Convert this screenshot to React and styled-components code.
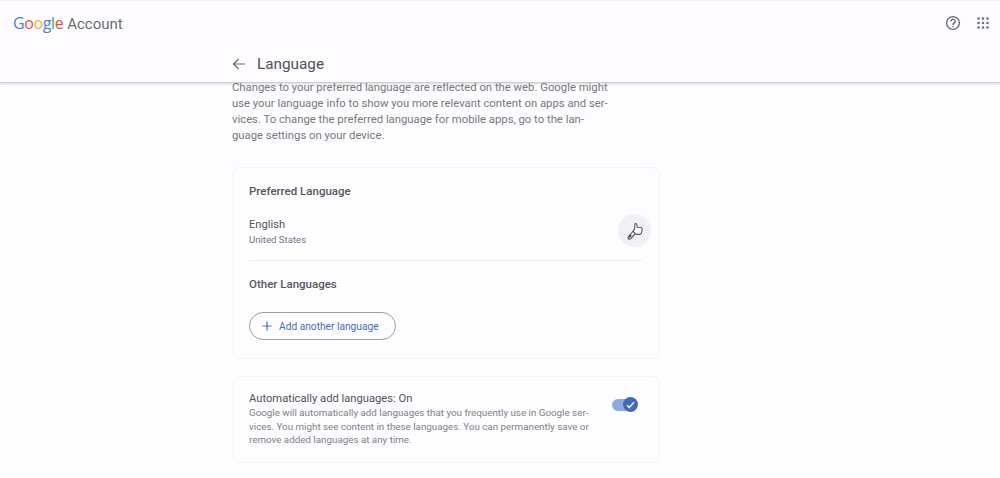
import React from 'react';
import styled, { createGlobalStyle } from 'styled-components';

const GlobalStyle = createGlobalStyle`
  html, body {
    margin: 0;
    height: 100%;
    background: #fdfcfe;
    overflow: hidden;
  }
  body {
    font-family: Roboto, "Liberation Sans", sans-serif;
    color: #45484b;
  }
`;

const Page = styled.div`
  width: 1000px;
  height: 478px;
  overflow: hidden;
`;

const Header = styled.header`
  position: relative;
  height: 83px;
  box-sizing: border-box;
  background: #fefcff;
  border-top: 1px solid #f0eff1;
  border-bottom: 1px solid #cfcfd0;
  box-shadow: 0 1px 3px rgba(60, 64, 67, 0.2);
`;

const TopBar = styled.div`
  height: 43px;
  padding: 0 11px 0 13px;
  display: flex;
  align-items: center;
  justify-content: space-between;
`;

const Brand = styled.div`
  display: flex;
  align-items: baseline;
  gap: 4px;
  font-size: 15px;
  color: #696c70;
`;

const Logo = styled.span`
  font-family: "Open Sans", Roboto, sans-serif;
  font-size: 16px;
  letter-spacing: -0.4px;
`;

const Letter = styled.span`
  color: ${props => props.$color};
`;

const TopIcons = styled.div`
  display: flex;
  align-items: center;
  gap: 16px;
`;

const SubBar = styled.div`
  height: 38px;
  box-sizing: border-box;
  padding: 1px 0 0 232px;
  display: flex;
  align-items: center;
  gap: 11px;
`;

const Title = styled.h1`
  margin: 0;
  font-size: 15.3px;
  font-weight: 400;
  color: #505357;
`;

const Main = styled.main`
  width: 428px;
  margin-left: 232px;
`;

const Intro = styled.p`
  margin: -3px 0 23px;
  font-size: 11.3px;
  line-height: 16px;
  color: #77797d;
`;

const Card = styled.section`
  box-sizing: border-box;
  margin-left: 1px;
  width: 427px;
  border: 1px solid #f3f2f5;
  border-radius: 8px;
  padding: 0 15px;
`;

const LanguageCard = styled(Card)`
  height: 192px;
  padding-top: 15px;
  margin-bottom: 17px;
`;

const AutoCard = styled(Card)`
  height: 87px;
  padding-top: 8px;
  display: flex;
  align-items: flex-start;
  justify-content: space-between;
`;

const CardTitle = styled.h2`
  margin: 0;
  font-size: 11.5px;
  line-height: 16px;
  font-weight: 500;
  color: #55585c;
`;

const LanguageRow = styled.div`
  box-sizing: border-box;
  height: 45px;
  margin: 17px 2px 0 0;
  display: flex;
  align-items: flex-start;
  justify-content: space-between;
  border-bottom: 1px solid #eeedf0;
`;

const LanguageName = styled.div`
  padding-top: 1px;
  font-size: 11.2px;
  line-height: 16px;
  color: #505357;
`;

const LanguageRegion = styled.div`
  margin-top: -1px;
  font-size: 9.6px;
  line-height: 16px;
  color: #77797d;
`;

const EditButton = styled.div`
  width: 33px;
  height: 33px;
  margin: -2px -9px 0 0;
  border-radius: 50%;
  background: #f1f0f3;
  display: flex;
  align-items: center;
  justify-content: center;
`;

const OtherTitle = styled(CardTitle)`
  margin-top: 15px;
`;

const AddButton = styled.button`
  margin-top: 20px;
  width: 147px;
  height: 28px;
  box-sizing: border-box;
  padding: 0 0 0 12px;
  display: flex;
  align-items: center;
  gap: 7px;
  background: transparent;
  border: 1px solid #9a9da1;
  border-radius: 14px;
  font-family: inherit;
  font-size: 10.2px;
  font-weight: 400;
  color: #4a6fb8;
`;

const AutoText = styled.div`
  padding-top: 6px;
`;

const AutoTitle = styled.div`
  font-size: 11.2px;
  line-height: 15px;
  color: #505357;
`;

const AutoBody = styled.p`
  margin: 0;
  font-size: 9.8px;
  line-height: 13.5px;
  color: #7f8185;
`;

const Toggle = styled.div`
  position: relative;
  width: 25px;
  height: 12px;
  margin: 14px 7px 0 0;
  border-radius: 6px;
  background: #8ea9dc;
`;

const ToggleThumb = styled.div`
  position: absolute;
  right: -1px;
  top: -2px;
  width: 15px;
  height: 15px;
  border-radius: 50%;
  background: #4169bd;
  display: flex;
  align-items: center;
  justify-content: center;
`;

const HelpIcon = () => (
  <svg width="16" height="16" viewBox="0 0 16 16" fill="none">
    <circle cx="8" cy="8" r="6.4" stroke="#6b6e72" strokeWidth="1.4" />
    <path d="M5.9 6.4a2.1 2.1 0 1 1 3.3 1.7c-.7.5-1.2.9-1.2 1.8" stroke="#5f6368" strokeWidth="1.3" />
    <circle cx="8" cy="11.5" r=".8" fill="#5f6368" />
  </svg>
);

const AppsIcon = () => (
  <svg width="12" height="12" viewBox="0 0 12 12" fill="#6b6e72">
    {[1.5, 6, 10.5].map(y =>
      [1.5, 6, 10.5].map(x => <circle key={`${x}-${y}`} cx={x} cy={y} r="1.3" />)
    )}
  </svg>
);

const BackIcon = () => (
  <svg width="14" height="14" viewBox="0 0 14 14" fill="none" stroke="#6b6e72" strokeWidth="1.2">
    <path d="M13 7H1.5M6.5 2 1.5 7l5 5" />
  </svg>
);

const CursorIcon = () => (
  <svg width="18" height="18" viewBox="0 0 18 18">
    <path d="M2 15.5 8 8l2.5 2.2-5.8 6.5-2.3.3z" fill="#fff" stroke="#55585c" strokeWidth="1.2" />
    <path d="M3 15.2 5 13" stroke="#3c4043" strokeWidth="2" />
    <path d="M9.5 1.5c1 0 1.4.6 1.4 1.5l.2 2.2 3.4.3c1.3.2 2 1 1.7 2.2l-.8 3.2c-.2 1-1 1.5-2 1.5h-3L7 9.5l1.6-2.3.3-4.5c0-.7.2-1.2.6-1.2z" fill="#fff" stroke="#55585c" strokeWidth="1.1" />
  </svg>
);

const PlusIcon = () => (
  <svg width="10" height="10" viewBox="0 0 10 10" stroke="#4a6fb8" strokeWidth="1.2">
    <path d="M5 .5v9M.5 5h9" />
  </svg>
);

const CheckIcon = () => (
  <svg width="9" height="8" viewBox="0 0 9 8" fill="none" stroke="#fff" strokeWidth="1.4">
    <path d="M1 4.2 3.3 6.5 8 1.2" />
  </svg>
);

const App = () => (
  <Page>
    <GlobalStyle />
    <Header>
      <TopBar>
        <Brand>
          <Logo>
            <Letter $color="#4a7fd9">G</Letter>
            <Letter $color="#d9534a">o</Letter>
            <Letter $color="#e5b73b">o</Letter>
            <Letter $color="#4a7fd9">g</Letter>
            <Letter $color="#4ea35f">l</Letter>
            <Letter $color="#d9534a">e</Letter>
          </Logo>
          Account
        </Brand>
        <TopIcons>
          <HelpIcon />
          <AppsIcon />
        </TopIcons>
      </TopBar>
      <SubBar>
        <BackIcon />
        <Title>Language</Title>
      </SubBar>
    </Header>
    <Main>
      <Intro>
        Changes to your preferred language are reflected on the web. Google might<br />
        use your language info to show you more relevant content on apps and ser-<br />
        vices. To change the preferred language for mobile apps, go to the lan-<br />
        guage settings on your device.
      </Intro>
      <LanguageCard>
        <CardTitle>Preferred Language</CardTitle>
        <LanguageRow>
          <div>
            <LanguageName>English</LanguageName>
            <LanguageRegion>United States</LanguageRegion>
          </div>
          <EditButton>
            <CursorIcon />
          </EditButton>
        </LanguageRow>
        <OtherTitle>Other Languages</OtherTitle>
        <AddButton>
          <PlusIcon />
          Add another language
        </AddButton>
      </LanguageCard>
      <AutoCard>
        <AutoText>
          <AutoTitle>Automatically add languages: On</AutoTitle>
          <AutoBody>
            Google will automatically add languages that you frequently use in Google ser-<br />
            vices. You might see content in these languages. You can permanently save or<br />
            remove added languages at any time.
          </AutoBody>
        </AutoText>
        <Toggle>
          <ToggleThumb>
            <CheckIcon />
          </ToggleThumb>
        </Toggle>
      </AutoCard>
    </Main>
  </Page>
);

export default App;
